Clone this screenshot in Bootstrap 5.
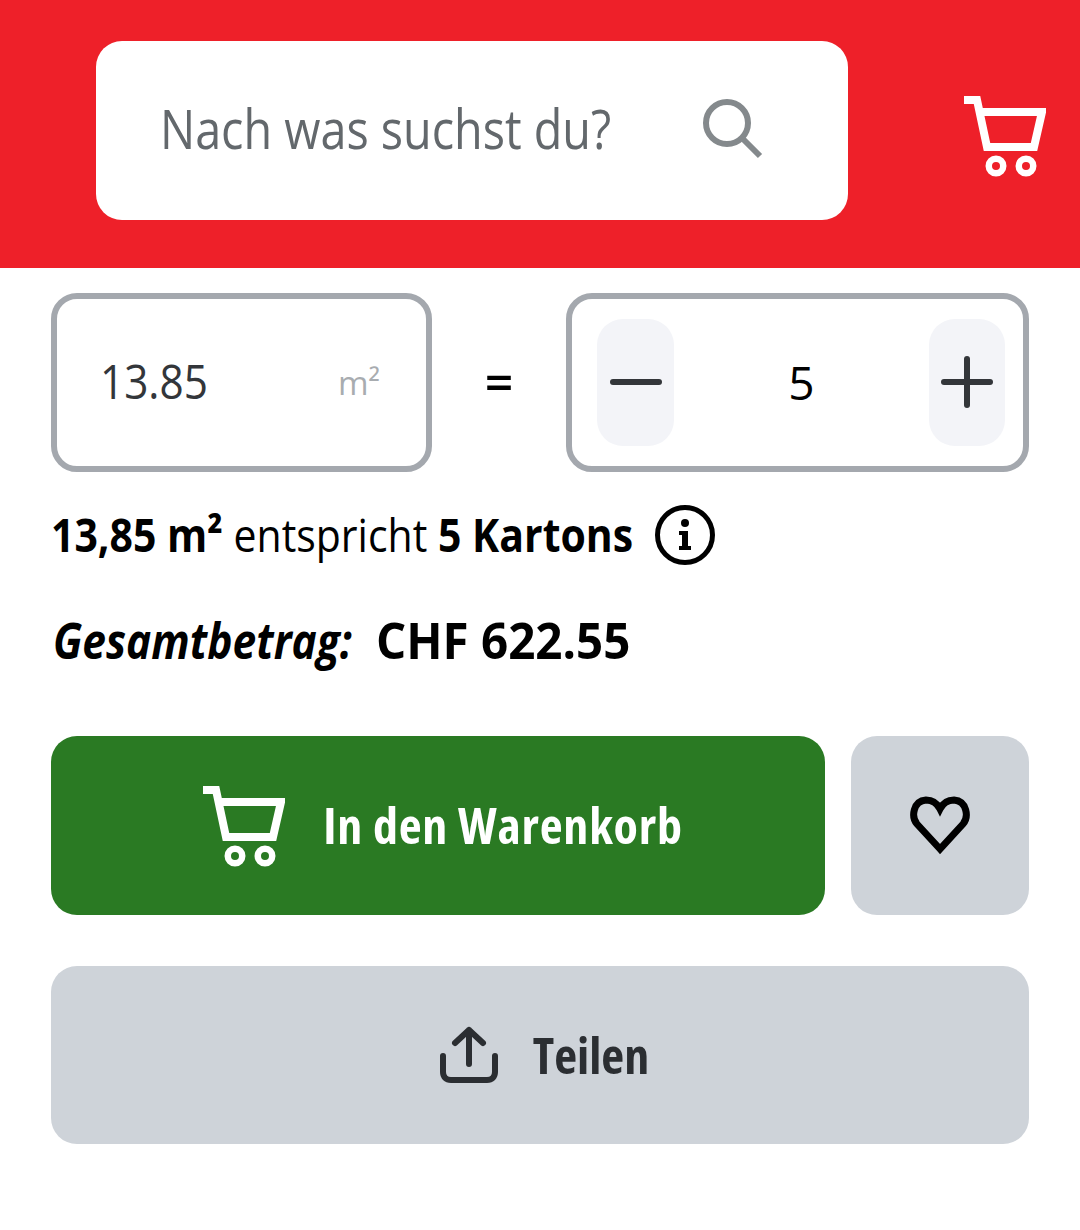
<!DOCTYPE html>
<html lang="de">
<head>
  <meta charset="UTF-8">
  <meta name="viewport" content="width=device-width, initial-scale=1">
  <title>Warenkorb</title>
  <link href="https://cdn.jsdelivr.net/npm/bootstrap@5.3.3/dist/css/bootstrap.min.css" rel="stylesheet">
  <style>
    body { background: #fff; font-family: "Open Sans", sans-serif; color: #000; }
    .schmal { display: inline-block; white-space: nowrap; transform-origin: 0 50%; }
    .kopf { background: #ee2029; height: 268px; padding: 41px 34px 0 96px; }
    .suche { width: 752px; height: 179px; background: #fff; border-radius: 26px; padding: 0 85px 4px 64px; }
    .suche-text { font-size: 54px; color: #63686c; transform: scaleX(.865); }
    .lupe { margin-bottom: 2px; }
    .korb-oben { margin-top: 54px; }
    .inhalt { padding: 25px 51px 0; }
    .feld { height: 179px; border: 6px solid #a4a8ae; border-radius: 26px; background: #fff; }
    .feld-m2 { width: 381px; padding: 0 46px 0 43px; }
    .feld-wert { font-size: 47px; color: #33363a; transform: scaleX(.9); padding-bottom: 2px; }
    .feld-einheit { font-size: 33px; color: #a8acb0; }
    .gleich { width: 134px; font-size: 50px; font-weight: 600; }
    .feld-menge { width: 463px; padding: 0 18px 0 25px; }
    .menge-btn { width: 77px; height: 127px; border-radius: 26px; background: #f3f4f8; border: 0; padding: 0 0 2px; }
    .menge-plus { width: 76px; }
    .menge-wert { font-size: 46px; }
    .zeile { font-size: 46px; height: 70px; margin-top: 28px; line-height: 70px; }
    .zeile-text { transform: scaleX(.891); margin: -3px -73px 0 0; }
    .summe { font-size: 50px; margin-top: 35px; line-height: 70px; font-weight: 700; }
    .summe-titel { transform: scaleX(.85); margin-right: -53px; margin-left: 2px; }
    .summe-wert { transform: scaleX(.95); margin-left: 24px; }
    .aktion { height: 179px; border: 0; border-radius: 26px; font-size: 50px; font-weight: 700; font-stretch: 75%; }
    .aktion-reihe { margin-top: 61px; }
    .aktion-gruen { background: #2a7a23; color: #fff; width: 774px; padding-left: 16px; gap: 38px; letter-spacing: .8px; }
    .aktion-grau { background: #ced3d9; color: #2b2e32; }
    .aktion-herz { width: 178px; }
    .aktion-teilen { height: 178px; margin-top: 51px; padding-left: 14px; gap: 34px; }
    .korb-rad { stroke-width: 6.5px; }
  </style>
</head>
<body>

  <div class="kopf d-flex justify-content-between">
    <div class="suche d-flex align-items-center justify-content-between">
      <span class="schmal suche-text">Nach was suchst du?</span>
      <svg class="lupe" width="62" height="62" viewBox="0 0 62 62" fill="none" stroke="#84898c" stroke-width="6"><circle cx="26" cy="26" r="21"/><path d="M41 41l18 18"/></svg>
    </div>
    <svg class="korb-oben" width="82" height="82" viewBox="0 0 82 82" fill="none" stroke="#fff" stroke-width="8"><path d="M0 5h13l10 47h47l8-35H16"/><circle class="korb-rad" cx="32" cy="71" r="7.250"/><circle class="korb-rad" cx="62" cy="71" r="7.250"/></svg>
  </div>

  <div class="inhalt">
    <div class="d-flex align-items-center">
      <div class="feld feld-m2 d-flex align-items-center justify-content-between">
        <span class="schmal feld-wert">13.85</span>
        <span class="feld-einheit">m²</span>
      </div>
      <div class="gleich text-center">=</div>
      <div class="feld feld-menge d-flex align-items-center justify-content-between">
        <button class="menge-btn d-flex align-items-center justify-content-center">
          <svg width="52" height="6" viewBox="0 0 52 6"><rect width="52" height="6" rx="3" fill="#33363a"/></svg>
        </button>
        <span class="menge-wert">5</span>
        <button class="menge-btn menge-plus d-flex align-items-center justify-content-center">
          <svg width="52" height="52" viewBox="0 0 52 52"><rect y="23" width="52" height="6" rx="3" fill="#33363a"/><rect x="23" width="6" height="52" rx="3" fill="#33363a"/></svg>
        </button>
      </div>
    </div>

    <div class="zeile d-flex align-items-center">
      <span class="schmal zeile-text"><b>13,85 m²</b> entspricht <b>5 Kartons</b></span>
      <svg class="ms-4" width="60" height="60" viewBox="0 0 60 60" fill="none"><circle cx="30" cy="30" r="27.500" stroke="#000" stroke-width="5"/><circle cx="30" cy="18" r="4" fill="#000"/><path d="M24 26h9v15h3v4H24v-4h3V30h-3z" fill="#000"/></svg>
    </div>

    <div class="summe d-flex"><i class="schmal summe-titel">Gesamtbetrag:</i><span class="schmal summe-wert">CHF 622.55</span></div>

    <div class="aktion-reihe d-flex justify-content-between">
      <button class="aktion aktion-gruen d-flex align-items-center justify-content-center">
        <svg width="82" height="82" viewBox="0 0 82 82" fill="none" stroke="#fff" stroke-width="8"><path d="M0 5h13l10 47h47l8-35H16"/><circle class="korb-rad" cx="32" cy="71" r="7.250"/><circle class="korb-rad" cx="62" cy="71" r="7.250"/></svg>
        In den Warenkorb
      </button>
      <button class="aktion aktion-grau aktion-herz d-flex align-items-center justify-content-center">
        <svg width="60" height="60" viewBox="0 0 60 60" fill="none" stroke="#000" stroke-width="7"><path d="M30 53L7 28C1 21 3 5 16 4c6 0 11 3 14 9 3-6 8-9 14-9 13 1 15 17 9 24z"/></svg>
      </button>
    </div>

    <button class="aktion aktion-grau aktion-teilen w-100 d-flex align-items-center justify-content-center">
      <svg width="60" height="58" viewBox="0 0 60 58" fill="none" stroke="#2b2e32" stroke-width="6" stroke-linecap="round" stroke-linejoin="round"><path d="M30 38V4M16 17L30 4l14 13M4 30v16c0 5 3 8 8 8h36c5 0 8-3 8-8V30"/></svg>
      Teilen
    </button>
  </div>

  <script src="https://cdn.jsdelivr.net/npm/bootstrap@5.3.3/dist/js/bootstrap.bundle.min.js"></script>
</body>
</html>
